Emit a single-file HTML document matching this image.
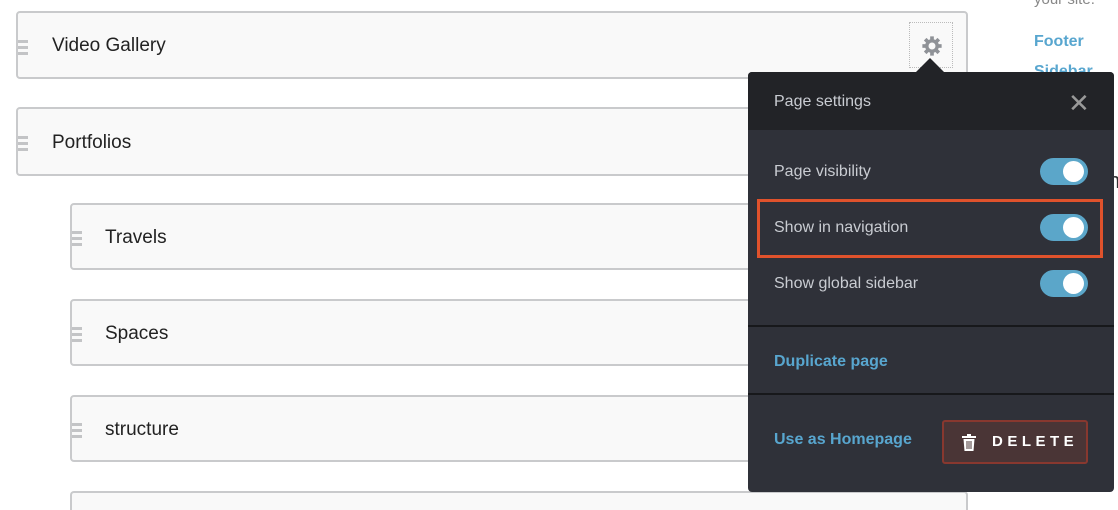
<!DOCTYPE html>
<html style="overflow:hidden;width:1118px;height:510px"><head><style>
body{margin:0;width:1118px;height:510px;overflow:hidden;background:#fff;font-family:"Liberation Sans",sans-serif;position:relative}
.box{position:absolute;background:#f9f9f9;border:2px solid #c9cacc;border-radius:4px;box-sizing:border-box;font-size:19px;color:#222;}
.box span{position:absolute;top:50%;transform:translateY(-45%)}
.h{position:absolute;left:0;width:10px;height:3px;background:#c3c4c6}
.p{position:absolute;left:748px;top:72px;width:366px;height:420px;background:#2f3139;border-radius:4px;overflow:visible}
.t{position:absolute;color:#c9ccd2;font-size:16px}
.tg{position:absolute;left:292px;width:48px;height:27px;border-radius:14px;background:#5ba6c9}
.tg:after{content:"";position:absolute;right:4px;top:3px;width:21px;height:21px;border-radius:50%;background:#fff}
.lk{position:absolute;color:#58a6cf;font-size:16px;font-weight:bold}
</style></head><body>
<div style="position:absolute;left:1034px;top:-9px;color:#888;font-size:15px">your site.</div>
<div style="position:absolute;left:1034px;top:33px;color:#58a6cf;font-size:16px;font-weight:bold">Footer</div>
<div style="position:absolute;left:1034px;top:63px;color:#58a6cf;font-size:16px;font-weight:bold">Sidebar</div>
<div style="position:absolute;left:1108px;top:168px;color:#333;font-size:22px">n</div>

<div class="box" style="left:16px;top:11px;width:952px;height:68px"><div class="h" style="top:27px"></div><div class="h" style="top:33px"></div><div class="h" style="top:39px"></div><span style="left:34px">Video Gallery</span>
<div style="position:absolute;left:891px;top:9px;width:44px;height:46px;border:1px dotted #bbb;box-sizing:border-box"></div>
<svg style="position:absolute;left:903px;top:22px" width="22" height="22" viewBox="0 0 24 24"><g fill="#8f9297"><circle cx="12" cy="12" r="7.5"/><rect x="10" y="1.5" width="4" height="21"/><rect x="10" y="1.5" width="4" height="21" transform="rotate(45 12 12)"/><rect x="10" y="1.5" width="4" height="21" transform="rotate(90 12 12)"/><rect x="10" y="1.5" width="4" height="21" transform="rotate(135 12 12)"/></g><circle cx="12" cy="12" r="3.8" fill="#f9f9f9"/></svg>
</div>
<div class="box" style="left:16px;top:107px;width:952px;height:69px"><div class="h" style="top:27px"></div><div class="h" style="top:33px"></div><div class="h" style="top:39px"></div><span style="left:34px">Portfolios</span></div>
<div class="box" style="left:70px;top:203px;width:898px;height:67px"><div class="h" style="top:26px"></div><div class="h" style="top:32px"></div><div class="h" style="top:38px"></div><span style="left:33px">Travels</span></div>
<div class="box" style="left:70px;top:299px;width:898px;height:67px"><div class="h" style="top:26px"></div><div class="h" style="top:32px"></div><div class="h" style="top:38px"></div><span style="left:33px">Spaces</span></div>
<div class="box" style="left:70px;top:395px;width:898px;height:67px"><div class="h" style="top:26px"></div><div class="h" style="top:32px"></div><div class="h" style="top:38px"></div><span style="left:33px">structure</span></div>
<div class="box" style="left:70px;top:491px;width:898px;height:19px;border-bottom:none;border-radius:4px 4px 0 0"></div>

<div class="p">
<div style="position:absolute;left:168px;top:-14px;width:0;height:0;border-left:14px solid transparent;border-right:14px solid transparent;border-bottom:14px solid #222327"></div>
<div style="position:absolute;left:0;top:0;width:366px;height:58px;background:#222327;border-radius:4px 4px 0 0"></div>
<div class="t" style="left:26px;top:21px">Page settings</div>
<div style="position:absolute;left:320px;top:18px;color:#999;font-size:26px;line-height:26px">✕</div>
<div class="t" style="left:26px;top:91px">Page visibility</div><div class="tg" style="top:86px"></div>
<div class="t" style="left:26px;top:147px">Show in navigation</div><div class="tg" style="top:142px"></div>
<div style="position:absolute;left:9px;top:127px;width:346px;height:59px;border:3px solid #e0522c;box-sizing:border-box"></div>
<div class="t" style="left:26px;top:203px">Show global sidebar</div><div class="tg" style="top:198px"></div>
<div style="position:absolute;left:0;top:253px;width:366px;height:2px;background:#17181b"></div>
<div class="lk" style="left:26px;top:281px">Duplicate page</div>
<div style="position:absolute;left:0;top:321px;width:366px;height:2px;background:#17181b"></div>
<div class="lk" style="left:26px;top:359px">Use as Homepage</div>
<div style="position:absolute;left:194px;top:348px;width:146px;height:44px;background:#4a3536;border:2px solid #88382f;border-radius:3px;box-sizing:border-box;color:#fff;font-weight:bold;font-size:15px;letter-spacing:4.5px;line-height:40px;padding-left:48px;white-space:nowrap">DELETE
<svg style="position:absolute;left:18px;top:12px" width="14" height="17" viewBox="0 0 14 17"><rect x="0" y="2" width="14" height="2" fill="#fff"/><rect x="5" y="0" width="4" height="2" fill="#fff"/><path d="M1.5 5h11l-1 12h-9z" fill="#fff"/><path d="M5 7v8M7 7v8M9 7v8" stroke="#4a3536" stroke-width="1"/></svg></div>
</div>
</body></html>
